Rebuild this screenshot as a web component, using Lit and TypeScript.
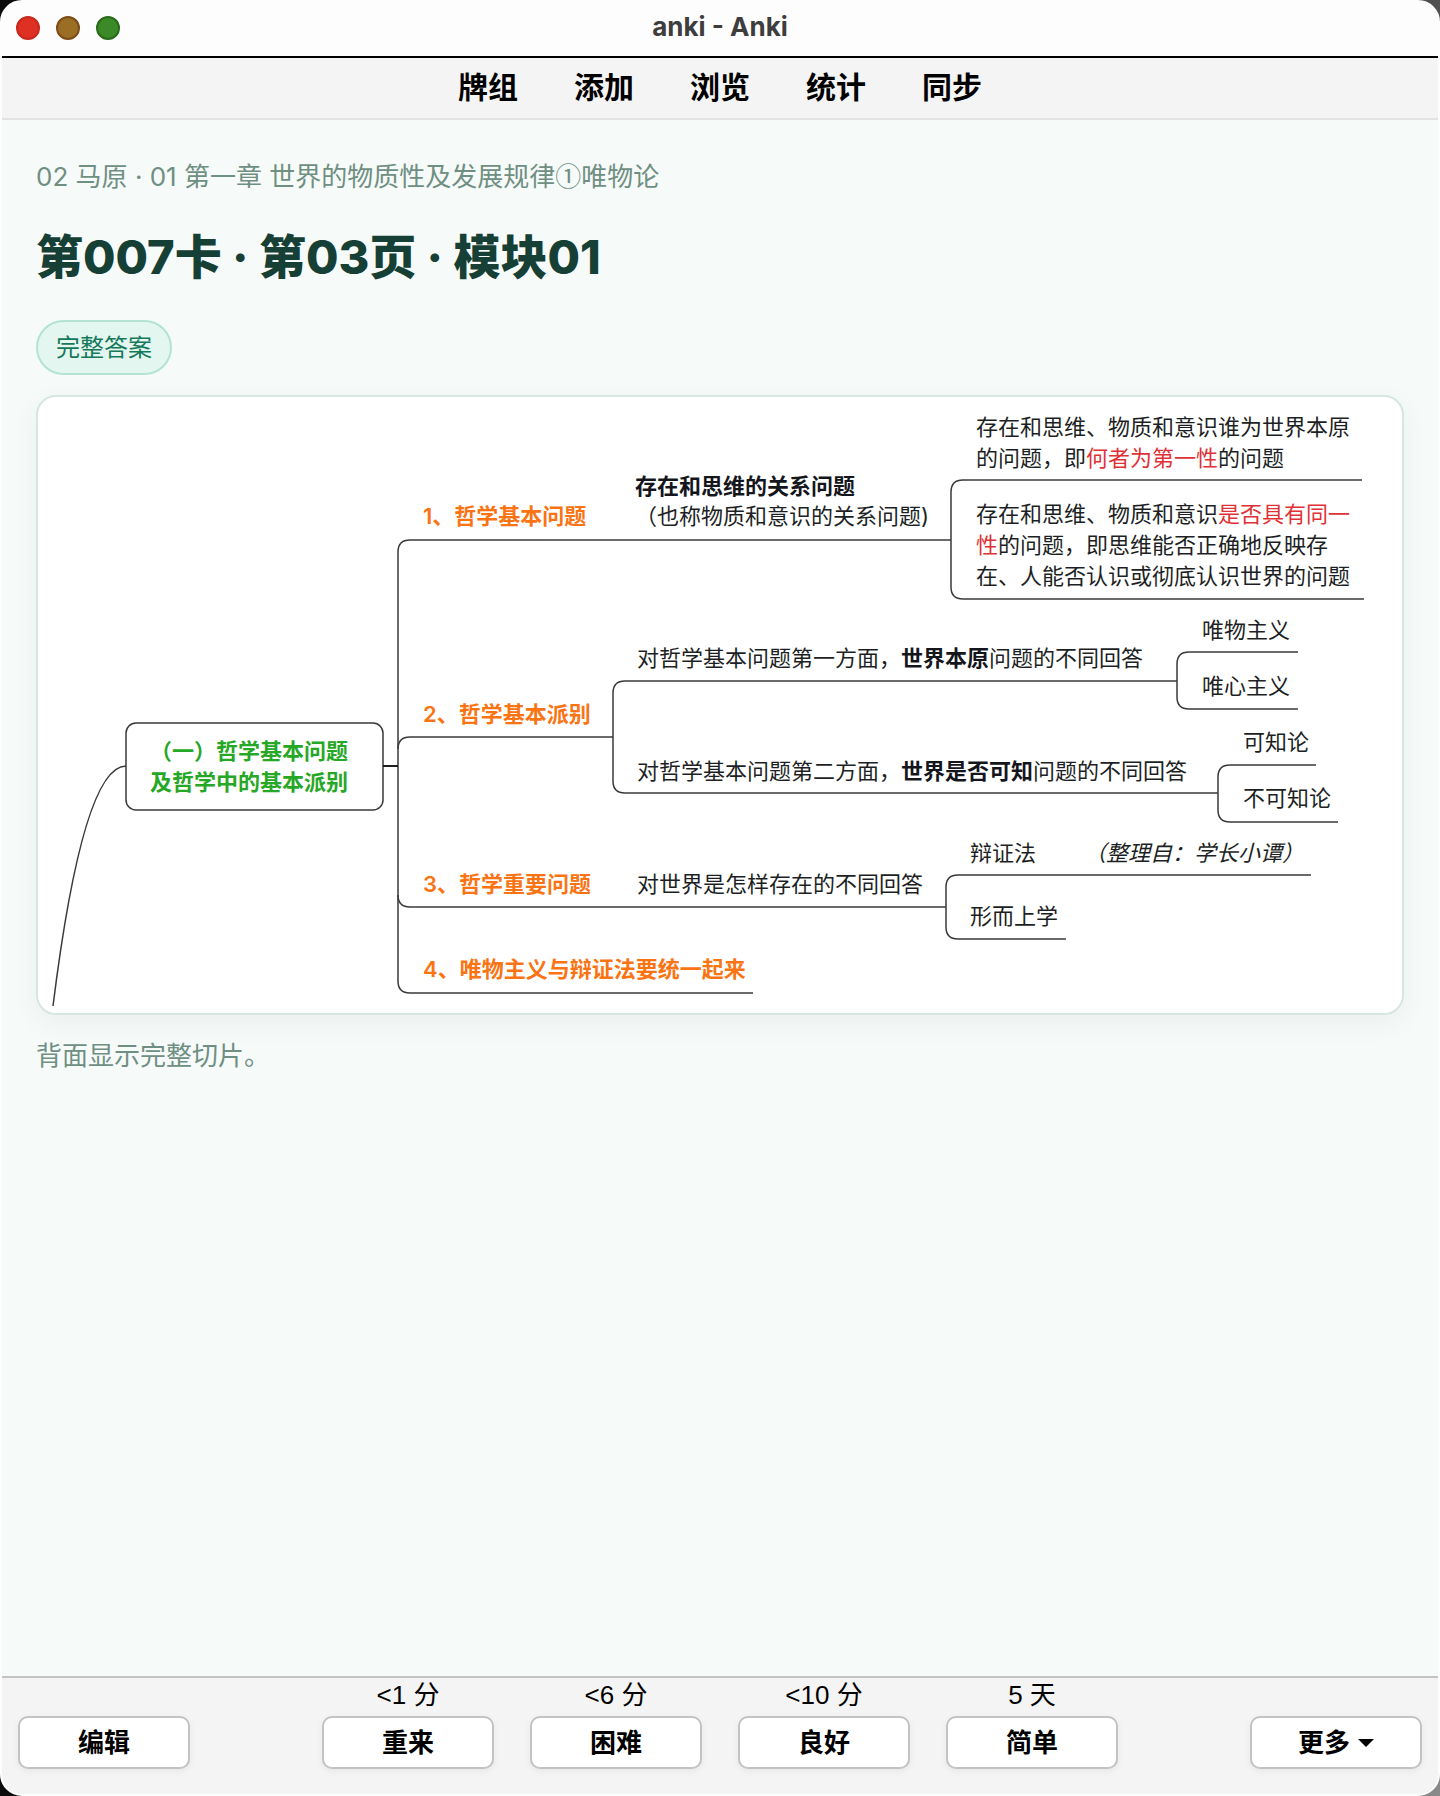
import { LitElement, html, svg, css } from "lit";
import { customElement } from "lit/decorators.js";

type Span = { t: string; cls?: string };
type Label = { x: number; y: number; cls?: string; spans: Span[] };

const plain = (x: number, y: number, t: string, cls = ""): Label => ({ x, y, cls, spans: [{ t }] });

/* Text of the mind map: x is the left edge, y the baseline. */
const labels: Label[] = [
  plain(112, 362, "（一）哲学基本问题", "root"),
  plain(112, 393, "及哲学中的基本派别", "root"),
  plain(385, 127, "1、哲学基本问题", "topic"),
  plain(385, 325, "2、哲学基本派别", "topic"),
  plain(385, 495, "3、哲学重要问题", "topic"),
  plain(385, 580, "4、唯物主义与辩证法要统一起来", "topic"),
  plain(597, 97, "存在和思维的关系问题", "strong"),
  plain(597, 127, "（也称物质和意识的关系问题)"),
  plain(938, 38, "存在和思维、物质和意识谁为世界本原"),
  { x: 938, y: 69, spans: [{ t: "的问题，即" }, { t: "何者为第一性", cls: "key" }, { t: "的问题" }] },
  { x: 938, y: 125, spans: [{ t: "存在和思维、物质和意识" }, { t: "是否具有同一", cls: "key" }] },
  { x: 938, y: 156, spans: [{ t: "性", cls: "key" }, { t: "的问题，即思维能否正确地反映存" }] },
  plain(938, 187, "在、人能否认识或彻底认识世界的问题"),
  {
    x: 599,
    y: 269,
    spans: [{ t: "对哲学基本问题第一方面，" }, { t: "世界本原", cls: "strong" }, { t: "问题的不同回答" }],
  },
  {
    x: 599,
    y: 382,
    spans: [{ t: "对哲学基本问题第二方面，" }, { t: "世界是否可知", cls: "strong" }, { t: "问题的不同回答" }],
  },
  plain(599, 495, "对世界是怎样存在的不同回答"),
  plain(1164, 241, "唯物主义"),
  plain(1164, 297, "唯心主义"),
  plain(1205, 353, "可知论"),
  plain(1205, 409, "不可知论"),
  plain(932, 464, "辩证法"),
  plain(1046, 464, "（整理自：学长小谭）", "credit"),
  plain(932, 527, "形而上学"),
];

const lines: string[] = [
  "M88 369Q45 369 15 609",
  "M510 143H372Q360 143 360 155V584Q360 596 372 596H715",
  "M510 143H913",
  "M360 352Q360 340 372 340H575",
  "M360 498Q360 510 372 510H908",
  "M1324 83H925Q913 83 913 95V190Q913 202 925 202H1326",
  "M1139 284H587Q575 284 575 296V384Q575 396 587 396H1180",
  "M1260 255H1151Q1139 255 1139 267V300Q1139 312 1151 312H1260",
  "M1278 368H1192Q1180 368 1180 380V413Q1180 425 1192 425H1300",
  "M1273 478H920Q908 478 908 490V530Q908 542 920 542H1028",
];

@customElement("mind-map")
export class MindMap extends LitElement {
  static styles = css`
    :host {
      display: block;
    }
    .map {
      display: block;
      width: 100%;
      height: auto;
      font-family: Inter, "Noto Sans CJK SC", sans-serif;
      font-size: 22px;
    }
    .line {
      fill: none;
      stroke: #3a3a3c;
      stroke-width: 1.5;
    }
    .stub {
      stroke: #1f1f21;
      stroke-width: 2;
    }
    .label {
      fill: #1d1f24;
    }
    .root {
      fill: #26a826;
      font-weight: 600;
    }
    .topic {
      fill: #fa7414;
      font-weight: 600;
    }
    .strong {
      fill: #14161c;
      font-weight: 700;
    }
    .key {
      fill: #e03136;
    }
    .credit {
      font-style: italic;
    }
  `;

  render() {
    return html`
      <svg class="map" viewBox="0 0 1364 616" role="img" aria-label="哲学基本问题及哲学中的基本派别">
        ${lines.map((d) => svg`<path class="line" d=${d}></path>`)}
        <rect class="line" x="88" y="326" width="257" height="87" rx="10"></rect>
        <path class="line stub" d="M345 369H360"></path>
        ${labels.map(
          (l) =>
            svg`<text class="label ${l.cls ?? ""}" x=${l.x} y=${l.y}>${l.spans.map(
              (s) => svg`<tspan class=${s.cls ?? ""}>${s.t}</tspan>`
            )}</text>`
        )}
      </svg>
    `;
  }
}

const menu = ["牌组", "添加", "浏览", "统计", "同步"];
const answers = [
  { due: "<1 分", name: "重来" },
  { due: "<6 分", name: "困难" },
  { due: "<10 分", name: "良好" },
  { due: "5 天", name: "简单" },
];

@customElement("app-root")
export class AppRoot extends LitElement {
  static styles = css`
    :host {
      display: block;
      background: linear-gradient(100deg, #0c0c0c 60%, #8a8a8a);
      font-family: Inter, "Noto Sans CJK SC", sans-serif;
    }
    * {
      box-sizing: border-box;
    }
    .window {
      display: flex;
      flex-direction: column;
      min-height: 100vh;
      border: 2px solid #fcfdfd;
      border-radius: 22px;
      background: #f6faf9;
      overflow: hidden;
    }
    .titlebar {
      display: grid;
      grid-template-columns: 1fr auto 1fr;
      align-items: center;
      height: 56px;
      padding: 0 14px 2px;
      background: #fdfdfd;
      border-bottom: 2px solid #000;
    }
    .lights {
      display: flex;
      gap: 16px;
    }
    .light {
      width: 24px;
      height: 24px;
      padding: 0;
      border: 2px solid;
      border-radius: 50%;
    }
    .close {
      background: #de3023;
      border-color: #c7291d;
    }
    .minimize {
      background: #9a6e23;
      border-color: #7d4c18;
    }
    .zoom {
      background: #3c8927;
      border-color: #2b691b;
    }
    .title {
      margin: 0;
      padding-bottom: 2px;
      font-size: 26px;
      line-height: 32px;
      font-weight: 700;
      color: #3d3d3d;
    }
    .menu {
      display: flex;
      justify-content: center;
      align-items: center;
      gap: 56px;
      height: 62px;
      padding-bottom: 2px;
      background: #f4f4f4;
      border-bottom: 2px solid #e3e3e3;
    }
    .menu-link {
      font-size: 30px;
      line-height: 40px;
      font-weight: 700;
      color: #000;
      text-decoration: none;
    }
    .content {
      flex: 1;
      padding: 36px 34px;
    }
    .deck,
    .hint {
      margin: 0;
      font-size: 26px;
      line-height: 42px;
      color: #6f8f83;
    }
    .numeral {
      font-family: "Noto Sans CJK SC", sans-serif;
      line-height: 1;
    }
    .heading {
      margin: 27px 0 31px;
      font-size: 47px;
      line-height: 64px;
      font-weight: 800;
      color: #163f35;
    }
    .badge {
      display: block;
      width: fit-content;
      padding: 8px 18px;
      border: 2px solid #b5e3d3;
      border-radius: 28px;
      background: #e3f7f0;
      font-size: 24px;
      line-height: 35px;
      color: #14795a;
    }
    .card {
      margin: 20px 0;
      border: 2px solid #d6e7e1;
      border-radius: 20px;
      background: #fff;
      box-shadow: 0 8px 28px rgba(22, 63, 53, 0.05);
    }
    .answer-bar {
      display: grid;
      grid-template-columns: 1fr auto 1fr;
      align-items: end;
      padding: 0 16px 25px;
      background: #f4f4f4;
      border-top: 2px solid #c3c3c3;
    }
    .answers {
      display: flex;
      gap: 36px;
    }
    .answer {
      display: flex;
      flex-direction: column;
      gap: 4px;
      text-align: center;
    }
    .due {
      font-family: "Liberation Sans", "Noto Sans CJK SC", sans-serif;
      font-size: 26px;
      line-height: 34px;
      color: #000;
    }
    .button {
      display: flex;
      justify-content: center;
      align-items: center;
      gap: 8px;
      width: 172px;
      height: 53px;
      padding: 0;
      border: 2px solid #c3c3c3;
      border-radius: 10px;
      background: #fff;
      box-shadow: 0 2px 6px rgba(0, 0, 0, 0.06);
      font-family: Inter, "Noto Sans CJK SC", sans-serif;
      font-size: 26px;
      line-height: 36px;
      font-weight: 600;
      color: #000;
    }
    .more {
      justify-self: end;
    }
    .arrow {
      width: 16px;
      height: 8px;
    }
  `;

  render() {
    return html`
      <div class="window">
        <header class="titlebar">
          <div class="lights">
            <button class="light close" aria-label="关闭"></button>
            <button class="light minimize" aria-label="最小化"></button>
            <button class="light zoom" aria-label="缩放"></button>
          </div>
          <p class="title">anki - Anki</p>
        </header>
        <nav class="menu">${menu.map((m) => html`<a class="menu-link" href="#">${m}</a>`)}</nav>
        <main class="content">
          <p class="deck">02 马原 · 01 第一章 世界的物质性及发展规律<span class="numeral">①</span>唯物论</p>
          <h1 class="heading">第007卡 · 第03页 · 模块01</h1>
          <span class="badge">完整答案</span>
          <div class="card"><mind-map></mind-map></div>
          <p class="hint">背面显示完整切片。</p>
        </main>
        <footer class="answer-bar">
          <button class="button">编辑</button>
          <div class="answers">
            ${answers.map(
              (a, i) => html`
                <div class="answer">
                  <span class="due" id="due-${i}">${a.due}</span>
                  <button class="button" aria-describedby="due-${i}">${a.name}</button>
                </div>
              `
            )}
          </div>
          <button class="button more">
            更多
            <svg class="arrow" viewBox="0 0 16 8" aria-hidden="true"><path d="M0 0H16L8 8Z"></path></svg>
          </button>
        </footer>
      </div>
    `;
  }
}
